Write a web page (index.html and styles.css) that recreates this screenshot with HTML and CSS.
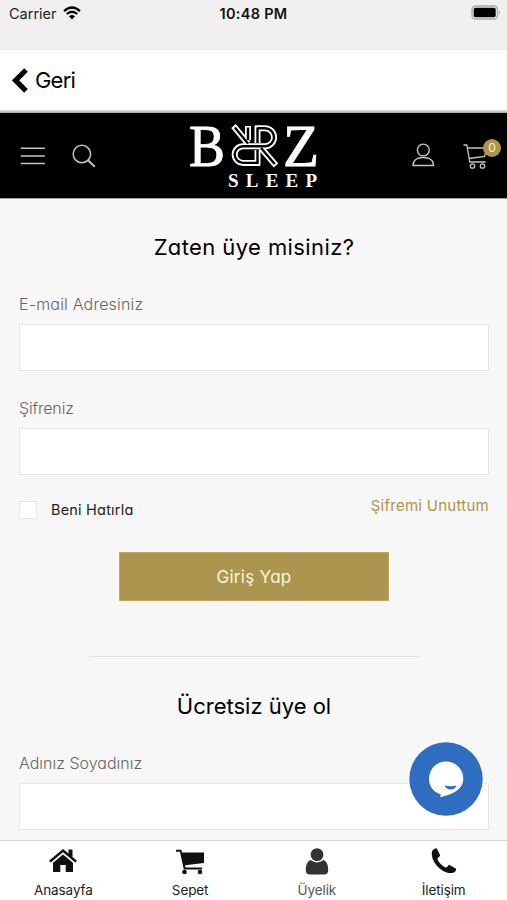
FILE: index.html
```html
<!DOCTYPE html>
<html lang="tr">

<head>
    <meta charset="UTF-8">
    <meta name="viewport" content="width=device-width, initial-scale=1.0">
    <title>BRZ Sleep</title>
    <link rel="stylesheet" href="styles.css">
</head>

<body>
    <div class="status-bar">
        <div class="carrier">
            <span>Carrier</span>
            <svg class="wifi" width="18" height="15" viewBox="0 0 18 15">
                <path d="M1 6.100Q9 -1 17 6.100M3.800 9Q9 4.400 14.200 9" fill="none" stroke="#000" stroke-width="2.300" />
                <path d="M6 11.200Q9 8.800 12 11.200L9 14.400z" />
            </svg>
        </div>
        <div class="time">10:48 PM</div>
        <svg class="battery" width="30" height="15" viewBox="0 0 30 15">
            <rect x="1" y="1" width="25.500" height="13" rx="3.600" fill="#eee" stroke="#aaa" stroke-width="1.400" />
            <rect x="2.700" y="2.800" width="22" height="9.400" rx="1.600" />
            <path d="M28 5.200q2 2.300 0 4.600z" fill="#aaa" />
        </svg>
    </div>

    <a class="back-bar" href="#">
        <svg width="16" height="25" viewBox="0 0 16 25">
            <path d="M14 2L3.500 12.400 14 22.800" fill="none" stroke="#000" stroke-width="5.200" />
        </svg>
        <span>Geri</span>
    </a>

    <header class="header">
        <div class="header-side">
            <svg width="26" height="26" viewBox="0 0 26 26">
                <path d="M.8 5.300h24M.8 13h24M.8 20.600h24" stroke="#c4c4c4" stroke-width="1.500" />
            </svg>
            <svg width="26" height="26" viewBox="0 0 26 26" fill="none" stroke="#c4c4c4">
                <circle cx="10.900" cy="11" r="8.700" stroke-width="1.500" />
                <path d="M17 17.200l6.800 6.500" stroke-width="2" />
            </svg>
        </div>
        <svg class="logo" width="132" height="70" viewBox="0 0 132 70">
            <text class="logo-letter" x="1" y="44.500" textLength="36" lengthAdjust="spacingAndGlyphs">B</text>
            <text class="logo-letter" x="95" y="44.500" textLength="36" lengthAdjust="spacingAndGlyphs">Z</text>
            <g class="monogram-outer">
                <path d="M67 7.200H77A9 9 0 0 1 77 25.300H55A8.300 8.300 0 0 0 55 41.900H72" />
                <path d="M69.500 5V22M69.500 29V44.500M60 5V19" />
                <path d="M45.500 5L60 22.500M73 27L88 44.500" />
            </g>
            <g class="monogram-inner">
                <path d="M69.500 7.200H77A9 9 0 0 1 77 25.300H55A8.300 8.300 0 0 0 55 41.900H69.500" />
                <path d="M69.500 6.500V22M69.500 29V43M60 6.500V19" />
                <path d="M46.800 6.500L60 22.500M73 27L86.700 43" />
            </g>
            <text class="logo-sub" x="40" y="65.500" textLength="89">SLEEP</text>
        </svg>
        <div class="header-side header-right">
            <svg width="24" height="26" viewBox="0 0 24 26" fill="none" stroke="#c4c4c4" stroke-width="1.400">
                <circle cx="12.300" cy="8" r="5.900" />
                <path d="M2 23.500c0-5 4-8 10.300-8s10.300 3 10.300 8z" stroke-linejoin="round" />
            </svg>
            <div class="cart">
                <svg width="26" height="28" viewBox="0 0 26 28" fill="none" stroke="#c4c4c4" stroke-width="1.300">
                    <path d="M.5 3h3.300l3 17h16M5 6h19l-2.500 8.500-15.500 2" />
                    <circle cx="9.500" cy="24" r="2.200" />
                    <circle cx="19.500" cy="24" r="2.200" />
                </svg>
                <span class="cart-count">0</span>
            </div>
        </div>
    </header>

    <main class="content">
        <form class="login">
            <h2 class="title-login">Zaten üye misiniz?</h2>
            <label class="label-email" for="email">E-mail Adresiniz</label>
            <input type="text" id="email">
            <label class="label-password" for="password">Şifreniz</label>
            <input type="password" id="password">
            <div class="options">
                <label class="remember"><input type="checkbox"><span>Beni Hatırla</span></label>
                <a class="forgot" href="#">Şifremi Unuttum</a>
            </div>
            <button type="button"><span>Giriş Yap</span></button>
        </form>
        <hr>
        <form class="register">
            <h2>Ücretsiz üye ol</h2>
            <label class="label-name" for="name">Adınız Soyadınız</label>
            <input type="text" id="name">
        </form>
    </main>

    <div class="chat">
        <svg width="74" height="74" viewBox="0 0 74 74">
            <circle cx="37" cy="37" r="36.700" fill="#2e6dc0" />
            <path d="M37 19.500a17.300 17.300 0 0 1 17.300 17.200c0 9-8.300 14-15.300 16.300-3.500 1.300-7 2-8 2.200.7-1 .8-2 .5-3-7-2-11.500-8-11.500-15.500A17.100 17.100 0 0 1 37 19.500z" fill="#fff" />
            <path d="M35.500 43.500q6 1.300 12 0-1.200 4-6 4-4 0-6-4z" fill="#2e6dc0" />
        </svg>
    </div>

    <nav class="tab-bar">
        <a href="#">
            <svg width="30" height="28" viewBox="0 0 30 28">
                <path d="M15 .9L1 12.700l1.700 1.800L15 4.300l12.300 10.200 1.700-1.800-4.500-3.800V1.400h-4v4.200z" />
                <path d="M15 6.400L5 14.700v9.300h7.300v-7h5.400v7H25v-9.300z" />
            </svg>
            <span>Anasayfa</span>
        </a>
        <a href="#">
            <svg width="30" height="28" viewBox="0 0 30 28">
                <path d="M1 1.800h5.300l.8 2.700H29V15L10 17.300l.6 2.100H27v2H8.800L4.900 3.700H1z" />
                <circle cx="9.500" cy="24" r="2.300" />
                <circle cx="25" cy="24" r="2.300" />
            </svg>
            <span>Sepet</span>
        </a>
        <a class="active" href="#">
            <svg width="30" height="28" viewBox="0 0 30 28">
                <circle cx="15" cy="6.600" r="6.400" />
                <path d="M8.500 12q6.500 4.800 13 0c3.500 1.500 4.700 5.500 4.700 10 0 3-1.500 4.500-4 4.500H8c-2.700 0-4.200-1.500-4.200-4.500 0-4.500 1.200-8.500 4.700-10z" />
            </svg>
            <span>Üyelik</span>
        </a>
        <a href="#">
            <svg width="30" height="28" viewBox="0 0 30 28">
                <path d="M3 3.500C4 1 6 .2 7.700.2l3.500 7.300c-.5 1.500-2.700 2-2.800 3.200C9 14 14 18.700 17 19.600c1.500 0 1.700-2.300 3-2.900l7.200 4c.2 2.300-1.500 3.800-4 4.200C13 26.500 1 13 3 3.500z" />
            </svg>
            <span>İletişim</span>
        </a>
    </nav>
</body>

</html>
```
FILE: styles.css
```css
* {
    box-sizing: border-box;
}

html,
body {
    height: 100%;
    margin: 0;
}

body {
    display: flex;
    flex-direction: column;
    overflow: hidden;
    background-color: #f7f7f7;
    font-family: Inter, "Liberation Sans", sans-serif;
    color: #000;
}

a {
    color: inherit;
    text-decoration: none;
}

svg {
    display: block;
    flex: none;
}

/* status bar */

.status-bar {
    flex: none;
    display: grid;
    grid-template-columns: 1fr auto 1fr;
    height: 50px;
    padding: 5px 6px 0 9px;
    align-items: start;
    background-color: #f0f0f0;
    border-bottom: 1px solid #e8e8e8;
    font-size: 14.5px;
    line-height: 17px;
}

.carrier {
    display: flex;
    gap: 6px;
    color: #222;
}

.time {
    margin-right: 3px;
    font-weight: 600;
    letter-spacing: 0.3px;
    color: #111;
}

.battery {
    justify-self: end;
}

.back-bar {
    flex: none;
    display: flex;
    align-items: center;
    gap: 7px;
    height: 60px;
    padding-left: 12px;
    background-color: #fff;
    font-size: 22px;
    letter-spacing: -0.8px;
}

/* site header */

.header {
    flex: none;
    display: grid;
    grid-template-columns: 168px 132px 1fr;
    align-items: center;
    height: 89px;
    padding: 3px 6px 0 20px;
    border-bottom: 1px solid #a0a0a0;
    background: linear-gradient(#e8e8e8, #a8a8a8 3px, #000 3px);
}

.header-side {
    display: flex;
    gap: 25px;
}

.header-right {
    justify-content: flex-end;
    gap: 28px;
}

.logo {
    overflow: visible;
}

.logo-letter {
    font-family: "Liberation Serif", serif;
    font-size: 60px;
    fill: #fff;
    stroke: #fff;
    stroke-width: 0.9px;
}

.logo-sub {
    font-family: "Liberation Serif", serif;
    font-size: 19px;
    font-weight: bold;
    fill: #fff;
}

.monogram-outer {
    fill: none;
    stroke: #fff;
    stroke-width: 6px;
}

.monogram-inner {
    fill: none;
    stroke: #000;
    stroke-width: 2.4px;
}

.cart {
    position: relative;
    width: 38px;
}

.cart-count {
    position: absolute;
    top: -3px;
    right: 0;
    width: 18px;
    height: 18px;
    border-radius: 50%;
    background-color: #ab954f;
    color: #fff3cf;
    font-size: 12px;
    line-height: 18px;
    text-align: center;
}

/* forms */

.content {
    flex: 1;
    min-height: 0;
    padding: 32px 18px 0 19px;
    overflow: hidden;
    font-feature-settings: "cv11";
}

form {
    display: flex;
    flex-direction: column;
}

h2 {
    margin: 0;
    font-size: 22px;
    font-weight: 400;
    line-height: 32px;
    text-align: center;
}

.title-login {
    letter-spacing: 0.4px;
}

label {
    font-size: 16px;
    font-weight: 300;
    line-height: 24px;
    color: #666;
}

form > label {
    align-self: flex-start;
    margin: 29px 0 8px;
}

.label-email {
    letter-spacing: 0.2px;
}

input {
    height: 47px;
    margin: 0;
    border: 1px solid #e9e6e1;
    background-color: #fff;
}

form > .label-password {
    margin-top: 25px;
    letter-spacing: -0.15px;
}

.options {
    display: flex;
    justify-content: space-between;
    height: 50px;
    margin-top: 18px;
}

.remember {
    display: flex;
    align-items: center;
    gap: 14px;
    height: 34px;
    font-size: 14.5px;
    font-weight: 400;
    letter-spacing: 0.2px;
    color: #222;
}

.remember input {
    appearance: none;
    width: 18px;
    height: 18px;
}

.forgot {
    font-size: 15px;
    line-height: 25px;
    letter-spacing: 0.27px;
    color: #ab954f;
}

button {
    align-self: center;
    width: 270px;
    height: 49px;
    margin-top: 9px;
    border: 1px solid #bba768;
    background-color: #ab954f;
    color: #fff6dc;
    font-family: inherit;
    font-feature-settings: inherit;
    font-size: 17px;
    letter-spacing: 0.3px;
}

hr {
    width: 330px;
    margin: 55px auto 33px;
    border: 0;
    border-top: 1px solid #e2e2e2;
}

/* chat button over the page */

.chat {
    position: absolute;
    left: 409px;
    top: 742px;
}

/* bottom tabs */

.tab-bar {
    flex: none;
    display: grid;
    grid-template-columns: repeat(4, 1fr);
    height: 60px;
    padding-top: 7px;
    border-top: 1px solid #d9d9d9;
    background-color: #fff;
}

.tab-bar a {
    display: flex;
    flex-direction: column;
    align-items: center;
    font-size: 13.5px;
    line-height: 16px;
    letter-spacing: -0.1px;
    color: #222;
    fill: #111;
}

.tab-bar span {
    margin-top: 6px;
}

.tab-bar .active {
    color: #555;
    fill: #333;
}
```
